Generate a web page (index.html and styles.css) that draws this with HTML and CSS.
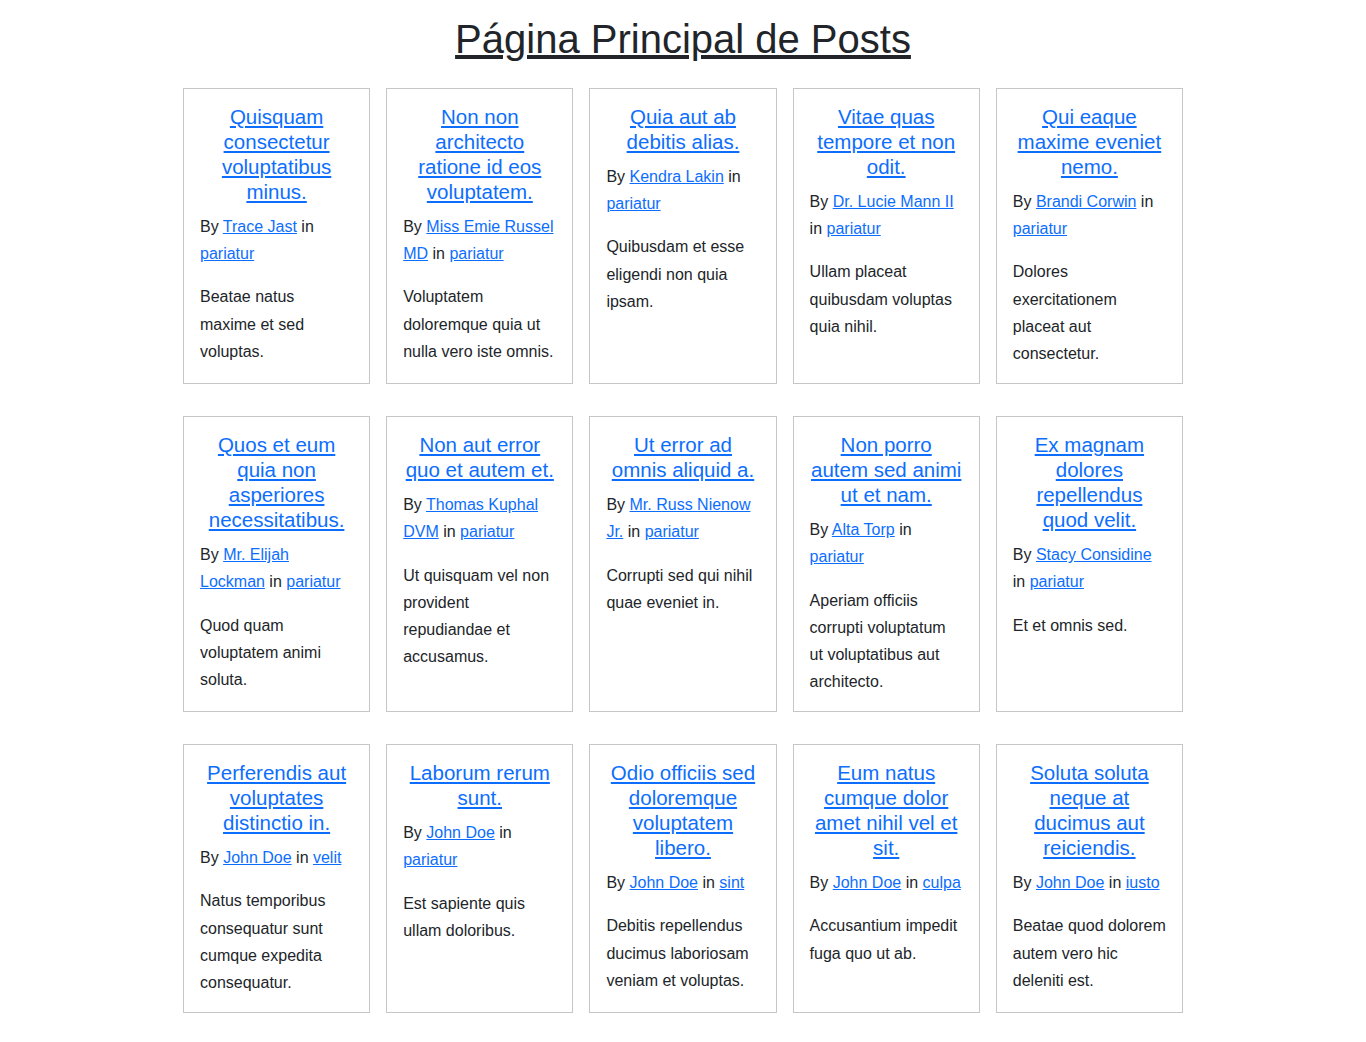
FILE: index.html
```html
<!DOCTYPE html>
<html lang="es">
<head>
<meta charset="utf-8">
<title>Página Principal de Posts</title>
<link rel="stylesheet" href="styles.css">
</head>
<body>
<main class="container">
  <h1 class="page-title"><a href="#">Página Principal de Posts</a></h1>
  <div class="grid">
    <article class="card"><h5 class="card-title"><a href="#">Quisquam consectetur voluptatibus minus.</a></h5><p class="meta">By <a href="#">Trace Jast</a> in <a href="#">pariatur</a></p><p class="body">Beatae natus maxime et sed voluptas.</p></article>
    <article class="card"><h5 class="card-title"><a href="#">Non non architecto ratione id eos voluptatem.</a></h5><p class="meta">By <a href="#">Miss Emie Russel MD</a> in <a href="#">pariatur</a></p><p class="body">Voluptatem doloremque quia ut nulla vero iste omnis.</p></article>
    <article class="card"><h5 class="card-title"><a href="#">Quia aut ab debitis alias.</a></h5><p class="meta">By <a href="#">Kendra Lakin</a> in <a href="#">pariatur</a></p><p class="body">Quibusdam et esse eligendi non quia ipsam.</p></article>
    <article class="card"><h5 class="card-title"><a href="#">Vitae quas tempore et non odit.</a></h5><p class="meta">By <a href="#">Dr. Lucie Mann II</a> in <a href="#">pariatur</a></p><p class="body">Ullam placeat quibusdam voluptas quia nihil.</p></article>
    <article class="card"><h5 class="card-title"><a href="#">Qui eaque maxime eveniet nemo.</a></h5><p class="meta">By <a href="#">Brandi Corwin</a> in <a href="#">pariatur</a></p><p class="body">Dolores exercitationem placeat aut consectetur.</p></article>

    <article class="card"><h5 class="card-title"><a href="#">Quos et eum quia non asperiores necessitatibus.</a></h5><p class="meta">By <a href="#">Mr. Elijah Lockman</a> in <a href="#">pariatur</a></p><p class="body">Quod quam voluptatem animi soluta.</p></article>
    <article class="card"><h5 class="card-title"><a href="#">Non aut error quo et autem et.</a></h5><p class="meta">By <a href="#">Thomas Kuphal DVM</a> in <a href="#">pariatur</a></p><p class="body">Ut quisquam vel non provident repudiandae et accusamus.</p></article>
    <article class="card"><h5 class="card-title"><a href="#">Ut error ad omnis aliquid a.</a></h5><p class="meta">By <a href="#">Mr. Russ Nienow Jr.</a> in <a href="#">pariatur</a></p><p class="body">Corrupti sed qui nihil quae eveniet in.</p></article>
    <article class="card"><h5 class="card-title"><a href="#">Non porro autem sed animi ut et nam.</a></h5><p class="meta">By <a href="#">Alta Torp</a> in <a href="#">pariatur</a></p><p class="body">Aperiam officiis corrupti voluptatum ut voluptatibus aut architecto.</p></article>
    <article class="card"><h5 class="card-title"><a href="#">Ex magnam dolores repellendus quod velit.</a></h5><p class="meta">By <a href="#">Stacy Considine</a> in <a href="#">pariatur</a></p><p class="body">Et et omnis sed.</p></article>

    <article class="card"><h5 class="card-title"><a href="#">Perferendis aut voluptates distinctio in.</a></h5><p class="meta">By <a href="#">John Doe</a> in <a href="#">velit</a></p><p class="body">Natus temporibus consequatur sunt cumque expedita consequatur.</p></article>
    <article class="card"><h5 class="card-title"><a href="#">Laborum rerum sunt.</a></h5><p class="meta">By <a href="#">John Doe</a> in <a href="#">pariatur</a></p><p class="body">Est sapiente quis ullam doloribus.</p></article>
    <article class="card"><h5 class="card-title"><a href="#">Odio officiis sed doloremque voluptatem libero.</a></h5><p class="meta">By <a href="#">John Doe</a> in <a href="#">sint</a></p><p class="body">Debitis repellendus ducimus laboriosam veniam et voluptas.</p></article>
    <article class="card"><h5 class="card-title"><a href="#">Eum natus cumque dolor amet nihil vel et sit.</a></h5><p class="meta">By <a href="#">John Doe</a> in <a href="#">culpa</a></p><p class="body">Accusantium impedit fuga quo ut ab.</p></article>
    <article class="card"><h5 class="card-title"><a href="#">Soluta soluta neque at ducimus aut reiciendis.</a></h5><p class="meta">By <a href="#">John Doe</a> in <a href="#">iusto</a></p><p class="body">Beatae quod dolorem autem vero hic deleniti est.</p></article>
  </div>
</main>
</body>
</html>
```

FILE: styles.css
```css
* { box-sizing: border-box; }

body {
  margin: 0;
  background: #fff;
  color: #212529;
  font-family: "Liberation Sans", Arial, sans-serif;
  font-size: 16px;
  line-height: 1.7;
}

a { color: #0d6efd; text-decoration: underline; }

.container {
  width: 1000px;
  margin: 0 auto;
}

.page-title {
  margin: 15px 0 25px;
  font-size: 40px;
  font-weight: 400;
  line-height: 48px;
  text-align: center;
}
.page-title a { color: #212529; }

.grid {
  display: grid;
  grid-template-columns: repeat(5, 1fr);
  column-gap: 16px;
  row-gap: 32px;
  padding-bottom: 30px;
}

.card {
  border: 1px solid #c6c6c6;
  padding: 15px 16px 16px;
}

.card-title {
  margin: 0 0 9px;
  font-size: 20.5px;
  font-weight: 400;
  line-height: 25px;
  text-align: center;
}

.meta { margin: 0 0 16px; }
.body { margin: 0; }
```
